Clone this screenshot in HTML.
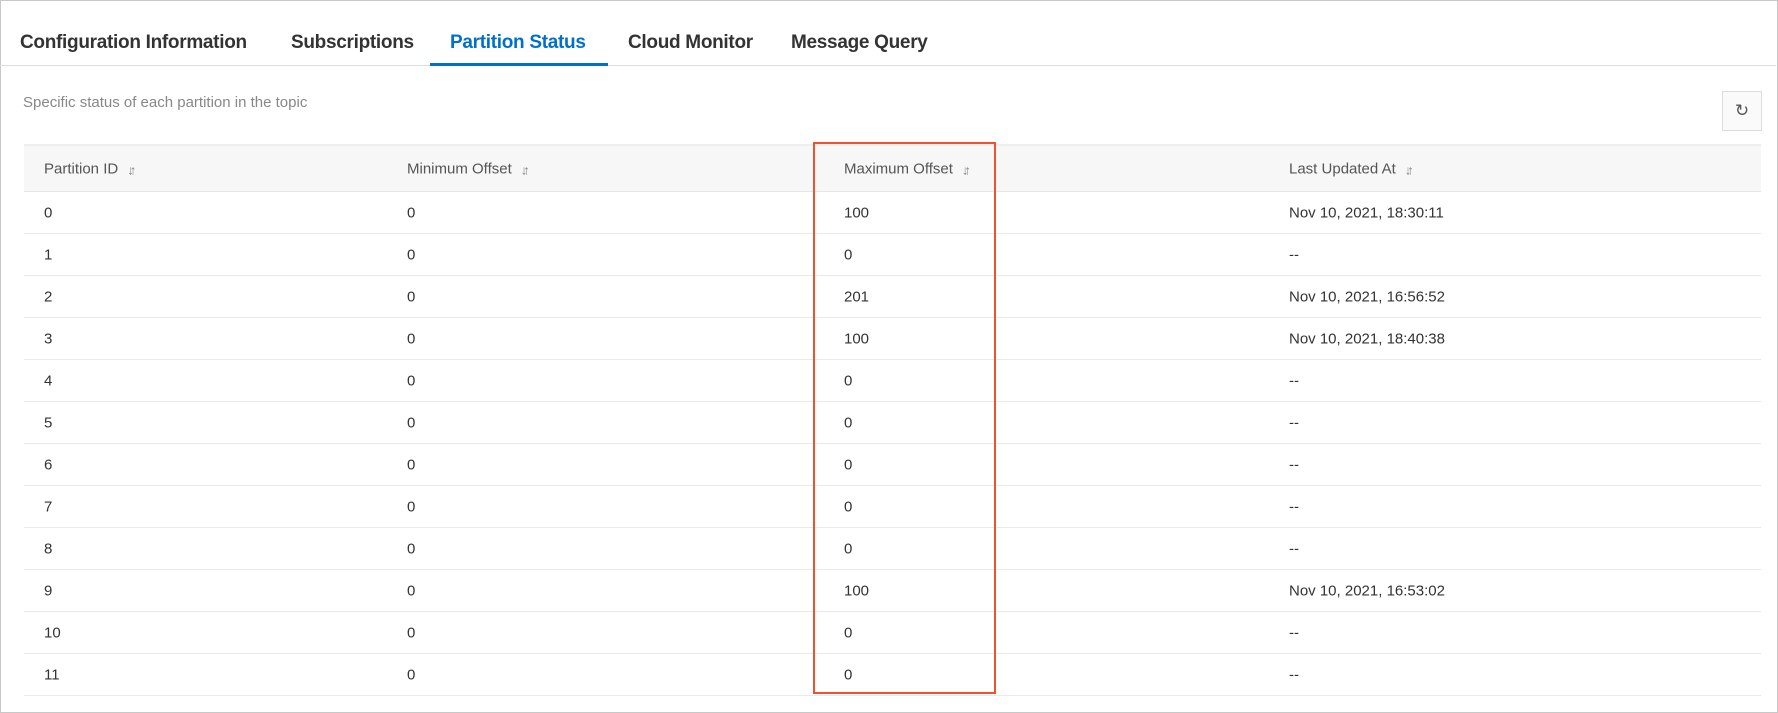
<!DOCTYPE html>
<html><head><style>
*{margin:0;padding:0;box-sizing:border-box}
body{width:1778px;height:713px;background:#fff;font-family:"Liberation Sans",sans-serif;color:#333;position:relative;overflow:hidden}
.frame{position:absolute;left:0;top:0;width:1778px;height:713px;border:1px solid #c8c8c8}
.tabs{position:absolute;left:0;top:0;width:1776px;height:66px;border-bottom:1px solid #ddd}
.tab{position:absolute;top:32px;font-size:19px;font-weight:bold;color:#333;letter-spacing:-0.3px}
.tab.on{color:#0070cc}
.ul{position:absolute;left:430px;top:63px;width:178px;height:3px;background:#0070cc}
.desc{position:absolute;left:23px;top:94px;font-size:15px;color:#888}
.btn{position:absolute;left:1722px;top:91px;width:40px;height:40px;border:1px solid #ddd;background:#fafafa;text-align:center;line-height:38px;font-size:17px;color:#555}
.hdr{position:absolute;left:24px;top:144px;width:1737px;height:48px;background:#f7f7f7;border-top:2px solid #eee;border-bottom:1px solid #e6e6e6}
.row{position:absolute;left:24px;width:1737px;height:42px;border-bottom:1px solid #e9e9e9}
.c{position:absolute;font-size:15px;top:50%;transform:translateY(-50%);white-space:nowrap}
.h .c{color:#555}
.s{display:inline-block;margin-left:9px;color:#888;font-size:13px;font-weight:bold;letter-spacing:-4px;vertical-align:-1px}
.red{position:absolute;left:813px;top:142px;width:183px;height:552px;border:2px solid #f0512f}
</style></head><body>
<div class="frame"></div>
<div class="tabs">
<div class="tab" style="left:20px">Configuration Information</div>
<div class="tab" style="left:291px">Subscriptions</div>
<div class="tab on" style="left:450px">Partition Status</div>
<div class="tab" style="left:628px">Cloud Monitor</div>
<div class="tab" style="left:791px">Message Query</div>
<div class="ul"></div>
</div>
<div class="desc">Specific status of each partition in the topic</div>
<div class="btn">&#x21bb;</div>
<div class="hdr h">
<div class="c" style="left:20px">Partition ID<span class="s">↓↑</span></div>
<div class="c" style="left:383px">Minimum Offset<span class="s">↓↑</span></div>
<div class="c" style="left:820px">Maximum Offset<span class="s">↓↑</span></div>
<div class="c" style="left:1265px">Last Updated At<span class="s">↓↑</span></div>
</div>
<div class="row" style="top:192px"><div class="c" style="left:20px">0</div><div class="c" style="left:383px">0</div><div class="c" style="left:820px">100</div><div class="c" style="left:1265px">Nov 10, 2021, 18:30:11</div></div>
<div class="row" style="top:234px"><div class="c" style="left:20px">1</div><div class="c" style="left:383px">0</div><div class="c" style="left:820px">0</div><div class="c" style="left:1265px">--</div></div>
<div class="row" style="top:276px"><div class="c" style="left:20px">2</div><div class="c" style="left:383px">0</div><div class="c" style="left:820px">201</div><div class="c" style="left:1265px">Nov 10, 2021, 16:56:52</div></div>
<div class="row" style="top:318px"><div class="c" style="left:20px">3</div><div class="c" style="left:383px">0</div><div class="c" style="left:820px">100</div><div class="c" style="left:1265px">Nov 10, 2021, 18:40:38</div></div>
<div class="row" style="top:360px"><div class="c" style="left:20px">4</div><div class="c" style="left:383px">0</div><div class="c" style="left:820px">0</div><div class="c" style="left:1265px">--</div></div>
<div class="row" style="top:402px"><div class="c" style="left:20px">5</div><div class="c" style="left:383px">0</div><div class="c" style="left:820px">0</div><div class="c" style="left:1265px">--</div></div>
<div class="row" style="top:444px"><div class="c" style="left:20px">6</div><div class="c" style="left:383px">0</div><div class="c" style="left:820px">0</div><div class="c" style="left:1265px">--</div></div>
<div class="row" style="top:486px"><div class="c" style="left:20px">7</div><div class="c" style="left:383px">0</div><div class="c" style="left:820px">0</div><div class="c" style="left:1265px">--</div></div>
<div class="row" style="top:528px"><div class="c" style="left:20px">8</div><div class="c" style="left:383px">0</div><div class="c" style="left:820px">0</div><div class="c" style="left:1265px">--</div></div>
<div class="row" style="top:570px"><div class="c" style="left:20px">9</div><div class="c" style="left:383px">0</div><div class="c" style="left:820px">100</div><div class="c" style="left:1265px">Nov 10, 2021, 16:53:02</div></div>
<div class="row" style="top:612px"><div class="c" style="left:20px">10</div><div class="c" style="left:383px">0</div><div class="c" style="left:820px">0</div><div class="c" style="left:1265px">--</div></div>
<div class="row" style="top:654px"><div class="c" style="left:20px">11</div><div class="c" style="left:383px">0</div><div class="c" style="left:820px">0</div><div class="c" style="left:1265px">--</div></div>
<div class="red"></div>
</body></html>
